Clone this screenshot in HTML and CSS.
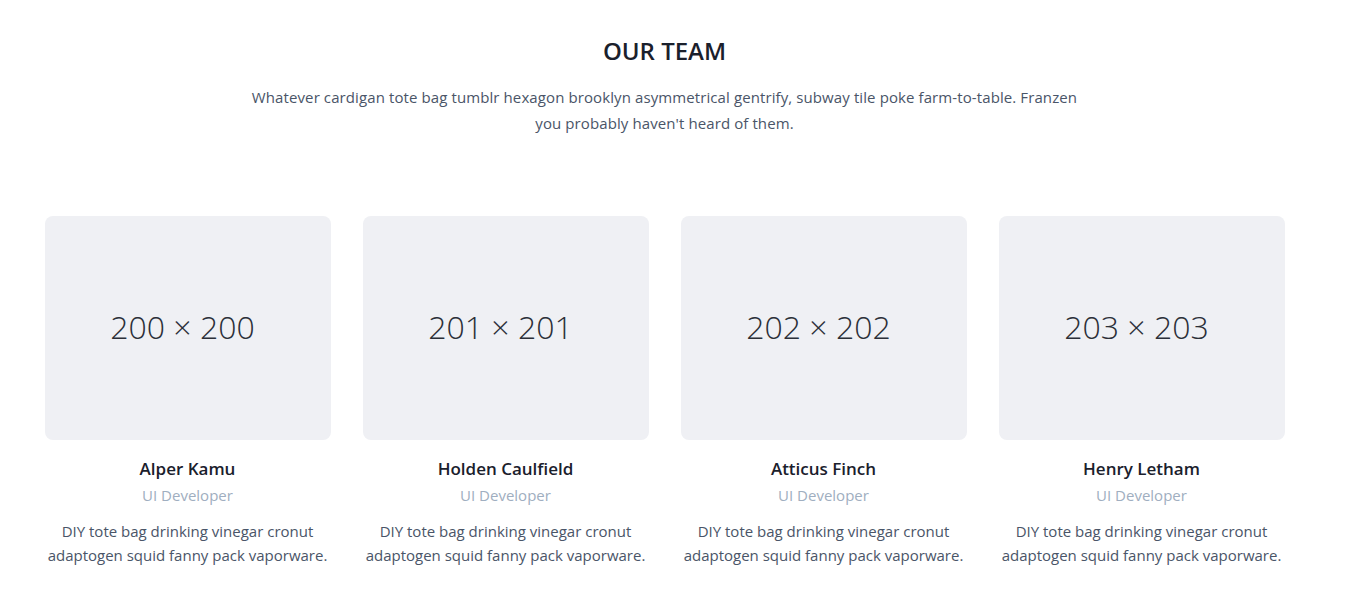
FILE: index.html
```html
<!DOCTYPE html>
<html lang="en">
<head>
<meta charset="utf-8">
<title>Our Team</title>
<link rel="stylesheet" href="styles.css">
</head>
<body>
<section class="team">
  <div class="container">
    <header class="intro">
      <h1 class="title">OUR TEAM</h1>
      <p class="lead">Whatever cardigan tote bag tumblr hexagon brooklyn asymmetrical gentrify, subway tile poke farm-to-table. Franzen you probably haven't heard of them.</p>
    </header>
    <div class="grid">
      <div class="member">
        <div class="photo"><span>200 × 200</span></div>
        <h2 class="name">Alper Kamu</h2>
        <p class="role">UI Developer</p>
        <p class="bio">DIY tote bag drinking vinegar cronut adaptogen squid fanny pack vaporware.</p>
      </div>
      <div class="member">
        <div class="photo"><span>201 × 201</span></div>
        <h2 class="name">Holden Caulfield</h2>
        <p class="role">UI Developer</p>
        <p class="bio">DIY tote bag drinking vinegar cronut adaptogen squid fanny pack vaporware.</p>
      </div>
      <div class="member">
        <div class="photo"><span>202 × 202</span></div>
        <h2 class="name">Atticus Finch</h2>
        <p class="role">UI Developer</p>
        <p class="bio">DIY tote bag drinking vinegar cronut adaptogen squid fanny pack vaporware.</p>
      </div>
      <div class="member">
        <div class="photo"><span>203 × 203</span></div>
        <h2 class="name">Henry Letham</h2>
        <p class="role">UI Developer</p>
        <p class="bio">DIY tote bag drinking vinegar cronut adaptogen squid fanny pack vaporware.</p>
      </div>
    </div>
  </div>
</section>
</body>
</html>
```

FILE: styles.css
```css
* { box-sizing: border-box; }
html, body { margin: 0; padding: 0; background: #fff; }
body {
  font-family: "Open Sans", "Noto Sans", sans-serif;
  color: #4a5568;
  padding-right: 17px;
}
.container {
  width: 1240px;
  margin: 0 auto;
  padding-top: 35px;
}
.intro {
  text-align: center;
  margin-bottom: 80px;
}
.title {
  margin: 0 0 17px;
  font-size: 24px;
  line-height: 32px;
  font-weight: 600;
  color: #1a202c;
}
.lead {
  margin: 0 auto;
  width: 850px;
  font-size: 15px;
  line-height: 26px;
  letter-spacing: 0.1px;
  color: #4a5568;
}
.grid {
  display: grid;
  grid-template-columns: repeat(4, 286px);
  column-gap: 32px;
}
.member { text-align: center; }
.photo {
  height: 224px;
  border-radius: 8px;
  background: #eff0f4;
  display: flex;
  align-items: center;
  justify-content: center;
}
.photo span {
  font-size: 32px;
  font-weight: 300;
  color: #2b2f38;
  margin-right: 10px;
  margin-bottom: 4px;
}
.name {
  margin: 15px 0 0;
  font-size: 17px;
  line-height: 28px;
  font-weight: 600;
  color: #1a202c;
}
.role {
  margin: 0;
  font-size: 15px;
  line-height: 24px;
  color: #a0aec0;
}
.bio {
  margin: 12px 0 0;
  font-size: 15px;
  line-height: 24px;
  color: #4a5568;
}
```
